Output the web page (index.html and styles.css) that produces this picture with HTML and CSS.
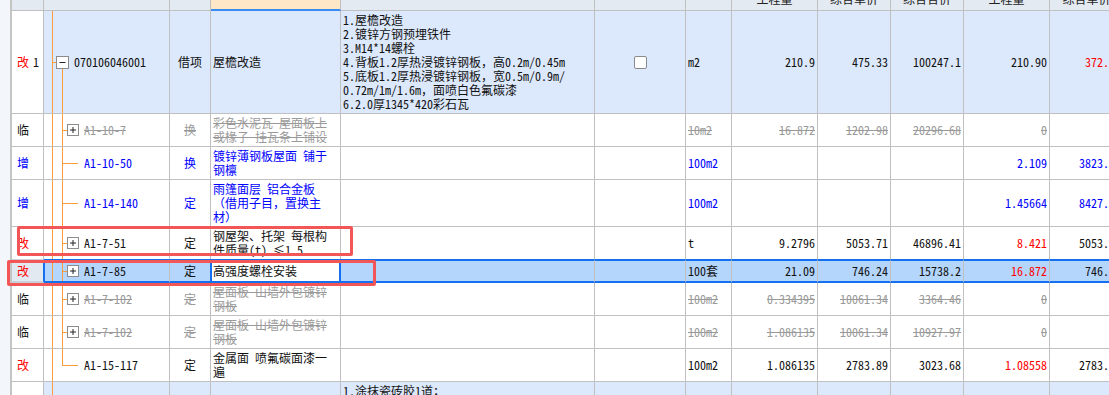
FILE: index.html
```html
<!DOCTYPE html>
<html lang="zh-CN">
<head>
<meta charset="utf-8">
<title>清单</title>
<link rel="stylesheet" href="styles.css">
</head>
<body>
<div class="sheet">
  <div class="side"></div>
  <div class="grid">
    <div class="row hdr">
      <div class="c"></div>
      <div class="c"></div>
      <div class="c"></div>
      <div class="c active"></div>
      <div class="c"></div>
      <div class="c"></div>
      <div class="c"></div>
      <div class="c">工程量</div>
      <div class="c">综合单价</div>
      <div class="c">综合合价</div>
      <div class="c">工程量</div>
      <div class="c">综合单价</div>
    </div>

    <div class="row r1">
      <div class="c mk"><span class="red">改</span><span class="idx">1</span></div>
      <div class="c code root"><svg class="box" width="13" height="13" viewBox="0 0 13 13"><rect x="0.5" y="0.5" width="12" height="12" fill="#fff" stroke="#8c8c8c"/><path d="M3.5 6.5h6" stroke="#222"/></svg>070106046001</div>
      <div class="c ctr">借项</div>
      <div class="c">屋檐改造</div>
      <div class="c">1.屋檐改造<br>2.镀锌方钢预埋铁件<br>3.M14*14螺栓<br>4.背板1.2厚热浸镀锌钢板，高0.2m/0.45m<br>5.底板1.2厚热浸镀锌钢板，宽0.5m/0.9m/<br>0.72m/1m/1.6m，面喷白色氟碳漆<br>6.2.0厚1345*420彩石瓦</div>
      <div class="c ctr"><span class="chk"></span></div>
      <div class="c">m2</div>
      <div class="c num">210.9</div>
      <div class="c num">475.33</div>
      <div class="c num">100247.1</div>
      <div class="c num">210.90</div>
      <div class="c num red">372.13</div>
    </div>

    <div class="row h33">
      <div class="c mk">临</div>
      <div class="c code kid"><svg class="box" width="12" height="12" viewBox="0 0 12 12"><rect x="0.5" y="0.5" width="11" height="11" fill="#fff" stroke="#8c8c8c"/><path d="M3 6h6M6 3v6" stroke="#222"/></svg><span class="del">A1-10-7</span></div>
      <div class="c ctr del">换</div>
      <div class="c del">彩色水泥瓦 屋面板上<br>或椽子 挂瓦条上铺设</div>
      <div class="c"></div>
      <div class="c"></div>
      <div class="c del">10m2</div>
      <div class="c num del">16.872</div>
      <div class="c num del">1202.98</div>
      <div class="c num del">20296.68</div>
      <div class="c num del">0</div>
      <div class="c num"></div>
    </div>

    <div class="row h33">
      <div class="c mk blue">增</div>
      <div class="c code kid leaf blue">A1-10-50</div>
      <div class="c ctr blue">换</div>
      <div class="c blue">镀锌薄钢板屋面 铺于<br>钢檩</div>
      <div class="c"></div>
      <div class="c"></div>
      <div class="c blue">100m2</div>
      <div class="c num"></div>
      <div class="c num"></div>
      <div class="c num"></div>
      <div class="c num blue">2.109</div>
      <div class="c num blue">3823.16</div>
    </div>

    <div class="row h47">
      <div class="c mk blue">增</div>
      <div class="c code kid leaf blue">A1-14-140</div>
      <div class="c ctr blue">定</div>
      <div class="c blue">雨篷面层 铝合金板<br>（借用子目，置换主<br>材）</div>
      <div class="c"></div>
      <div class="c"></div>
      <div class="c blue">100m2</div>
      <div class="c num"></div>
      <div class="c num"></div>
      <div class="c num"></div>
      <div class="c num blue">1.45664</div>
      <div class="c num blue">8427.85</div>
    </div>

    <div class="row h33">
      <div class="c mk red">改</div>
      <div class="c code kid"><svg class="box" width="12" height="12" viewBox="0 0 12 12"><rect x="0.5" y="0.5" width="11" height="11" fill="#fff" stroke="#8c8c8c"/><path d="M3 6h6M6 3v6" stroke="#222"/></svg>A1-7-51</div>
      <div class="c ctr">定</div>
      <div class="c">钢屋架、托架 每根构<br>件质量(t) ≤1.5</div>
      <div class="c"></div>
      <div class="c"></div>
      <div class="c">t</div>
      <div class="c num">9.2796</div>
      <div class="c num">5053.71</div>
      <div class="c num">46896.41</div>
      <div class="c num red">8.421</div>
      <div class="c num">5053.71</div>
    </div>

    <div class="row sel">
      <div class="c mk red">改</div>
      <div class="c code kid"><svg class="box" width="12" height="12" viewBox="0 0 12 12"><rect x="0.5" y="0.5" width="11" height="11" fill="#fff" stroke="#8c8c8c"/><path d="M3 6h6M6 3v6" stroke="#222"/></svg>A1-7-85</div>
      <div class="c ctr type">定</div>
      <div class="c name">高强度螺栓安装</div>
      <div class="c"></div>
      <div class="c"></div>
      <div class="c">100套</div>
      <div class="c num">21.09</div>
      <div class="c num">746.24</div>
      <div class="c num">15738.2</div>
      <div class="c num red">16.872</div>
      <div class="c num">746.24</div>
    </div>

    <div class="row h33">
      <div class="c mk">临</div>
      <div class="c code kid"><svg class="box" width="12" height="12" viewBox="0 0 12 12"><rect x="0.5" y="0.5" width="11" height="11" fill="#fff" stroke="#8c8c8c"/><path d="M3 6h6M6 3v6" stroke="#222"/></svg><span class="del">A1-7-102</span></div>
      <div class="c ctr del">定</div>
      <div class="c del">屋面板 山墙外包镀锌<br>钢板</div>
      <div class="c"></div>
      <div class="c"></div>
      <div class="c del">100m2</div>
      <div class="c num del">0.334395</div>
      <div class="c num del">10061.34</div>
      <div class="c num del">3364.46</div>
      <div class="c num del">0</div>
      <div class="c num"></div>
    </div>

    <div class="row h33">
      <div class="c mk">临</div>
      <div class="c code kid"><svg class="box" width="12" height="12" viewBox="0 0 12 12"><rect x="0.5" y="0.5" width="11" height="11" fill="#fff" stroke="#8c8c8c"/><path d="M3 6h6M6 3v6" stroke="#222"/></svg><span class="del">A1-7-102</span></div>
      <div class="c ctr del">定</div>
      <div class="c del">屋面板 山墙外包镀锌<br>钢板</div>
      <div class="c"></div>
      <div class="c"></div>
      <div class="c del">100m2</div>
      <div class="c num del">1.086135</div>
      <div class="c num del">10061.34</div>
      <div class="c num del">10927.97</div>
      <div class="c num del">0</div>
      <div class="c num"></div>
    </div>

    <div class="row h33">
      <div class="c mk red">改</div>
      <div class="c code kid leaf last">A1-15-117</div>
      <div class="c ctr">定</div>
      <div class="c">金属面 喷氟碳面漆一<br>遍</div>
      <div class="c"></div>
      <div class="c"></div>
      <div class="c">100m2</div>
      <div class="c num">1.086135</div>
      <div class="c num">2783.89</div>
      <div class="c num">3023.68</div>
      <div class="c num red">1.08558</div>
      <div class="c num">2783.89</div>
    </div>

    <div class="row r2">
      <div class="c mk"></div>
      <div class="c code trunk"></div>
      <div class="c"></div>
      <div class="c"></div>
      <div class="c top">1.涂抹瓷砖胶1道；</div>
      <div class="c"></div>
      <div class="c"></div>
      <div class="c"></div>
      <div class="c"></div>
      <div class="c"></div>
      <div class="c"></div>
      <div class="c"></div>
    </div>
  </div>

  <div class="anno anno-a"></div>
  <div class="anno anno-b"></div>
</div>
</body>
</html>
```

FILE: styles.css
```css
html, body {
  margin: 0;
  padding: 0;
  background: #ffffff;
}

body {
  font-family: "Noto Sans Mono CJK SC", "Noto Sans CJK SC", sans-serif;
  font-size: 12px;
  color: #111111;
}

.sheet {
  position: relative;
  display: flex;
  width: 1109px;
  height: 395px;
  overflow: hidden;
}

.side {
  flex: none;
  width: 10px;
  background: #f3f7fc;
  border-right: 2px solid #c4c4c4;
}

.grid {
  flex: none;
  width: 1112px;
}

.row {
  display: grid;
  grid-template-columns: 32px 126px 41px 130px 254px 91px 46px 86px 73px 73px 86px 74px;
}

.c {
  box-sizing: border-box;
  display: flex;
  align-items: center;
  padding: 0 2px;
  line-height: 14px;
  white-space: nowrap;
  overflow: hidden;
  border-right: 1px solid #c0c0c0;
  border-bottom: 1px solid #c0c0c0;
  background-color: #ffffff;
}

.ctr { justify-content: center; }
.num { justify-content: flex-end; padding-right: 2px; }
.top { align-items: flex-start; padding-top: 2px; }

.red { color: #ff0000; }
.blue { color: #0000ff; }
.del {
  color: #9a9a9a;
  text-decoration: line-through;
}

/* header */
.hdr { height: 11px; }
.hdr .c {
  background-color: #e4eaf2;
  align-items: flex-end;
  justify-content: center;
  padding-bottom: 4px;
  color: #222222;
}
.hdr .c.active {
  background-color: #fde7c7;
  border-bottom: 2px solid #3a8cf0;
}

/* row heights */
.r1 { height: 103px; }
.h33 { height: 33px; }
.h47 { height: 47px; }
.r2 { height: 40px; }

.r1 .c, .r2 .c { background-color: #dce8fb; }
.r1 .mk, .r2 .mk { background-color: #ffffff; }

/* marker column */
.mk { padding-left: 5px; }
.idx { margin-left: 4px; color: #111111; }

/* tree column */
.code {
  gap: 5px;
  background-repeat: no-repeat;
}
.box { flex: none; display: block; }

.root {
  padding-left: 12px;
  background-image:
    linear-gradient(#ff9d3c, #ff9d3c),
    linear-gradient(#ff9d3c, #ff9d3c),
    linear-gradient(#ff9d3c, #ff9d3c);
  background-position: 8px 0, 8px 50%, 18px 100%;
  background-size: 1px 100%, 4px 1px, 1px calc(50% - 6px);
}

.kid {
  padding-left: 23px;
  background-image:
    linear-gradient(#ff9d3c, #ff9d3c),
    linear-gradient(#ff9d3c, #ff9d3c),
    linear-gradient(#ff9d3c, #ff9d3c);
  background-position: 8px 0, 18px 0, 18px 50%;
  background-size: 1px 100%, 1px 100%, 5px 1px;
}
.kid.leaf {
  padding-left: 40px;
  background-size: 1px 100%, 1px 100%, 16px 1px;
}
.kid.last {
  background-size: 1px 100%, 1px 50%, 16px 1px;
}
.trunk {
  background-image: linear-gradient(#ff9d3c, #ff9d3c);
  background-position: 8px 0;
  background-size: 1px 100%;
}

/* checkbox */
.chk {
  display: block;
  width: 13px;
  height: 13px;
  box-sizing: border-box;
  border: 1px solid #8a8a8a;
  border-radius: 2px;
  background: #ffffff;
}

/* selected row */
.sel {
  height: 24px;
  margin-top: -1px;
}
.sel .c {
  background-color: #b4d5fc;
  border-top: 2px solid #1570ef;
  border-bottom: 2px solid #1570ef;
}
.sel .mk {
  background-color: #e3e9f1;
  border-top-color: #c9d0da;
  border-bottom-color: #c9d0da;
  border-right-color: #1570ef;
}
.sel .code { border-left: 1px solid #1570ef; padding-left: 22px; }
.sel .type { border-right-color: #1570ef; }
.sel .name {
  background-color: #ffffff;
  border-left: 1px solid #1570ef;
  border-right: 2px solid #1570ef;
  padding-left: 1px;
}
.sel .code { background-position: 7px 0, 17px 0, 17px 50%; }

/* annotation boxes drawn over the grid */
.anno {
  position: absolute;
  box-sizing: border-box;
  border: 3px solid #f25656;
  border-radius: 2px;
  pointer-events: none;
}
.anno-a { left: 17px; top: 226px; width: 336px; height: 30px; }
.anno-b { left: 7px; top: 260px; width: 369px; height: 26px; }
```
